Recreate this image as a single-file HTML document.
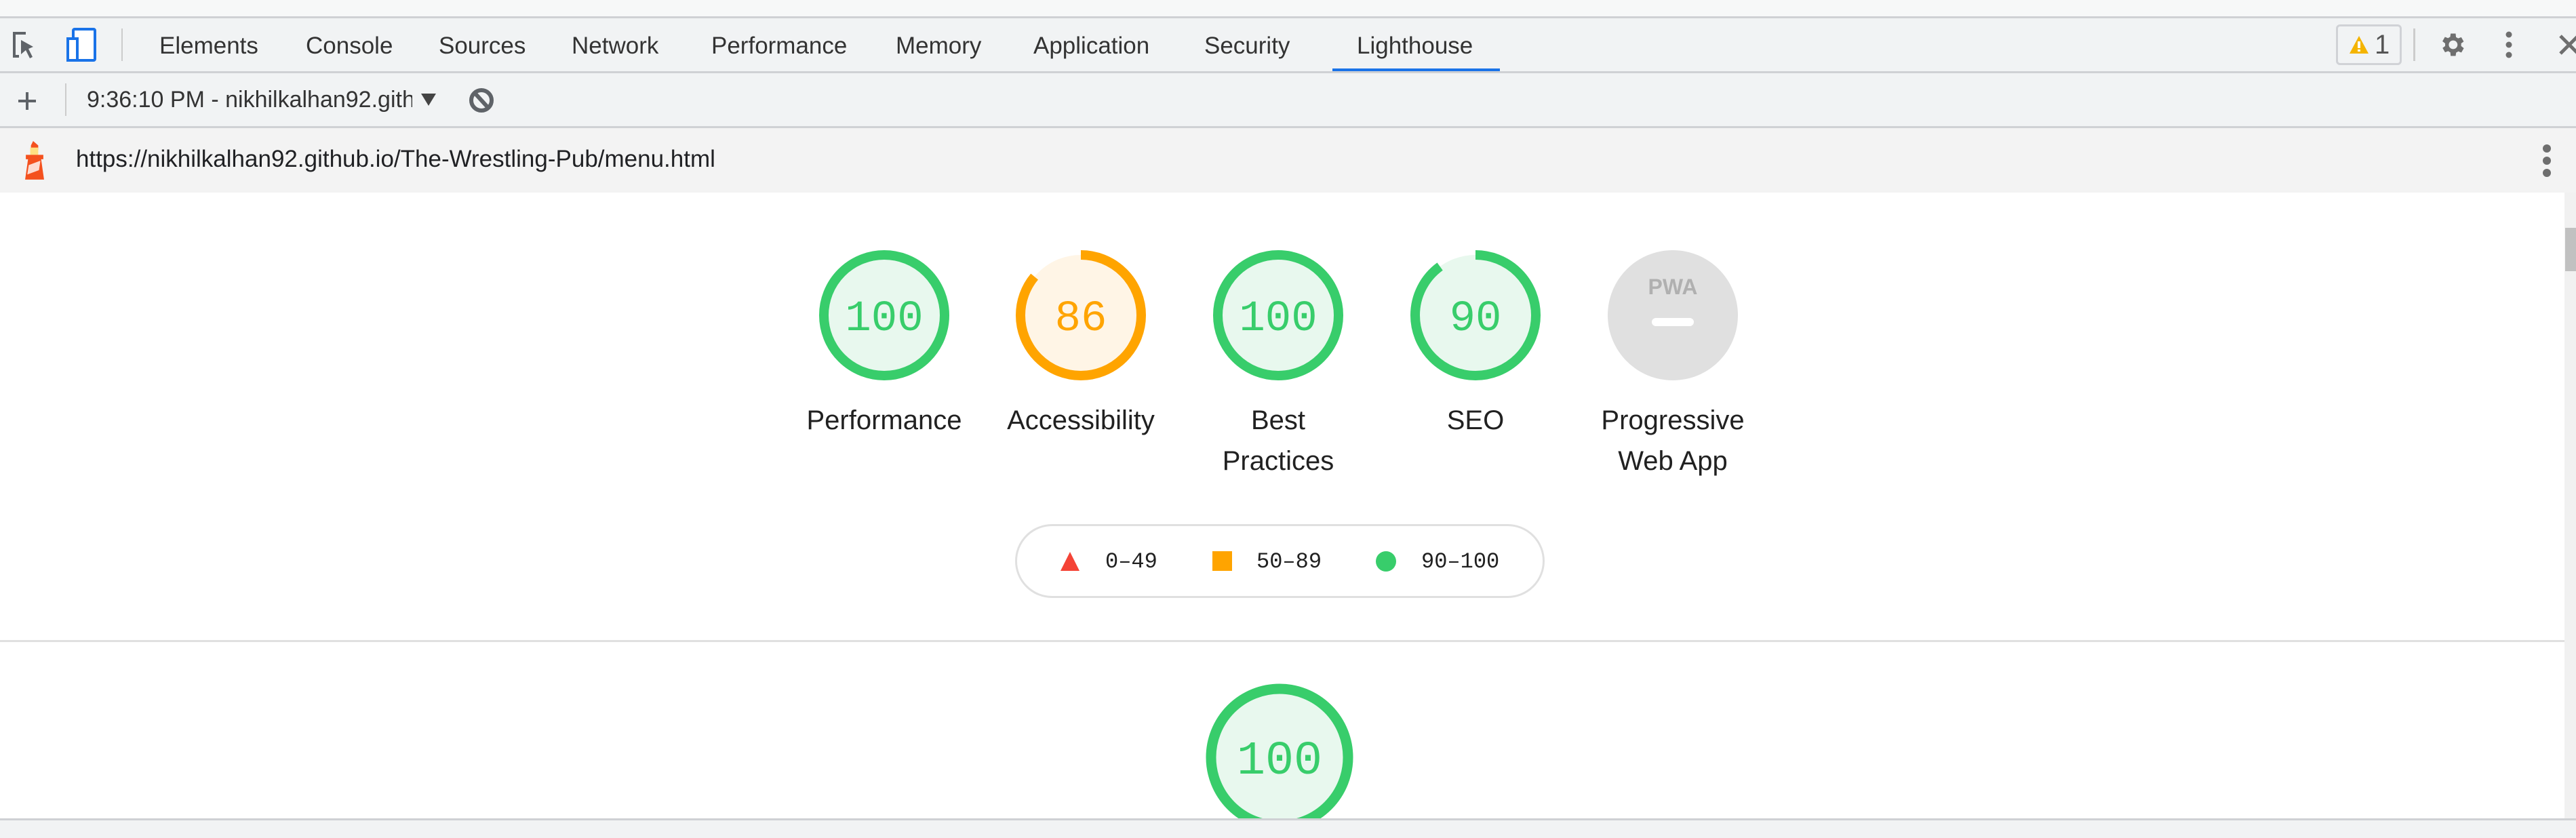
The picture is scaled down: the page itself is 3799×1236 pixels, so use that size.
<!DOCTYPE html>
<html><head><meta charset="utf-8"><style>
*{margin:0;padding:0;box-sizing:border-box}
body{width:3799px;height:1236px;position:relative;overflow:hidden;background:#fff;font-family:"Liberation Sans",sans-serif}
.a{position:absolute}
.tab{position:absolute;top:46px;font-size:35px;color:#333;line-height:44px}
.mono{font-family:"Liberation Mono","DejaVu Sans Mono",monospace}
.lbl{position:absolute;width:300px;text-align:center;font-size:40px;color:#212121;line-height:60px;top:590px}
</style></head><body>
<div class="a" style="left:0;top:0;width:3799px;height:24px;background:#f7f8f8"></div>
<div class="a" style="left:0;top:24px;width:3799px;height:3px;background:#cfd1d4"></div>
<div class="a" style="left:0;top:27px;width:3799px;height:79px;background:#f1f3f4"></div>
<div class="a" style="left:0;top:105px;width:3799px;height:3px;background:#cfd1d4"></div>
<div class="a" style="left:0;top:108px;width:3799px;height:78px;background:#f1f3f4"></div>
<div class="a" style="left:0;top:186px;width:3799px;height:3px;background:#cfd1d4"></div>
<div class="a" style="left:0;top:189px;width:3799px;height:95px;background:#f3f3f3"></div>

<!-- top icons -->
<svg class="a" style="left:18px;top:46px" width="50" height="44" viewBox="0 0 50 44"><path d="M20 3H3v34h7" fill="none" stroke="#5f6368" stroke-width="4"/><path d="M13 13l18 10-7 3 6 12-4 2-6-12-7 6z" fill="#5f6368"/></svg>
<svg class="a" style="left:98px;top:41px" width="46" height="50"><rect x="10" y="2" width="32" height="46" rx="2" fill="#fff" stroke="#1a73e8" stroke-width="4"/><rect x="2" y="16" width="14" height="32" fill="#fff" stroke="#1a73e8" stroke-width="4"/></svg>
<div class="a" style="left:179px;top:42px;width:2px;height:48px;background:#ccc"></div>
<div class="tab" style="left:235px">Elements</div>
<div class="tab" style="left:451px">Console</div>
<div class="tab" style="left:647px">Sources</div>
<div class="tab" style="left:843px">Network</div>
<div class="tab" style="left:1049px">Performance</div>
<div class="tab" style="left:1321px">Memory</div>
<div class="tab" style="left:1524px">Application</div>
<div class="tab" style="left:1776px">Security</div>
<div class="tab" style="left:2001px">Lighthouse</div>
<div class="a" style="left:1965px;top:101px;width:247px;height:4px;background:#1a73e8"></div>

<div class="a" style="left:3445px;top:36px;width:97px;height:60px;border:3px solid #d0d2d6;border-radius:6px"></div>
<svg class="a" style="left:3464px;top:52px" width="30" height="28"><path d="M15 1L29 27H1z" fill="#f4b400"/><rect x="13" y="9" width="4" height="10" fill="#fff"/><rect x="13" y="21" width="4" height="3" fill="#fff"/></svg>
<div class="a" style="left:3502px;top:44px;font-size:40px;color:#555">1</div>
<div class="a" style="left:3559px;top:42px;width:3px;height:48px;background:#ccc"></div>
<svg class="a" style="left:3594px;top:44px" width="44" height="44" viewBox="0 0 24 24"><path fill="#6e6e6e" d="M19.4 13a7.5 7.5 0 000-2l2.1-1.6-2-3.5-2.5 1a7.3 7.3 0 00-1.7-1L15 3h-4l-.4 2.7a7.3 7.3 0 00-1.7 1l-2.5-1-2 3.5L6.6 11a7.5 7.5 0 000 2l-2.1 1.6 2 3.5 2.5-1a7.3 7.3 0 001.7 1L11 21h4l.4-2.7a7.3 7.3 0 001.7-1l2.5 1 2-3.5zM13 15.5a3.5 3.5 0 110-7 3.5 3.5 0 010 7z"/></svg>
<svg class="a" style="left:3691px;top:46px" width="18" height="44"><circle cx="9" cy="5" r="4.5" fill="#6e6e6e"/><circle cx="9" cy="20" r="4.5" fill="#6e6e6e"/><circle cx="9" cy="35" r="4.5" fill="#6e6e6e"/></svg>
<svg class="a" style="left:3773px;top:50px" width="30" height="32"><path d="M3 3l26 26M29 3L3 29" stroke="#6e6e6e" stroke-width="5"/></svg>

<!-- row2 -->
<svg class="a" style="left:25px;top:134px" width="30" height="30"><path d="M15 2v26M2 15h26" stroke="#5f6368" stroke-width="4"/></svg>
<div class="a" style="left:96px;top:123px;width:2px;height:48px;background:#ccc"></div>
<div class="a" style="left:128px;top:128px;font-size:34px;color:#333;width:480px;overflow:hidden;white-space:nowrap">9:36:10 PM - nikhilkalhan92.github.io</div>
<svg class="a" style="left:620px;top:136px" width="24" height="22"><path d="M1 2h22L12 20z" fill="#444"/></svg>
<svg class="a" style="left:690px;top:127px" width="40" height="42"><circle cx="20" cy="21" r="15" fill="none" stroke="#5f6368" stroke-width="6"/><path d="M10 10l20 22" stroke="#5f6368" stroke-width="6"/></svg>

<!-- url row -->
<svg class="a" style="left:28px;top:208px" width="46" height="58" viewBox="0 0 40 54"><path d="M18 0l7 6v6h-10V6z" fill="#f4511e"/><rect x="14" y="9" width="11" height="10" fill="#ffe082"/><path d="M8 19h24v6h-3l4 28H7l4-28H8z" fill="#f4511e"/><path d="M12 33l16-6-2 13-16 6z" fill="#fff" opacity=".8"/></svg>
<div class="a" style="left:112px;top:215px;font-size:35px;color:#202124">https://nikhilkalhan92.github.io/The-Wrestling-Pub/menu.html</div>
<svg class="a" style="left:3746px;top:210px" width="20" height="54"><circle cx="10" cy="9" r="6" fill="#6e6e6e"/><circle cx="10" cy="27" r="6" fill="#6e6e6e"/><circle cx="10" cy="45" r="6" fill="#6e6e6e"/></svg>

<!-- scrollbar -->
<div class="a" style="left:3782px;top:284px;width:17px;height:925px;background:#f1f1f1"></div>
<div class="a" style="left:3783px;top:336px;width:16px;height:64px;background:#c1c1c1"></div>

<!-- gauges -->
<svg class="a" style="left:0;top:284px" width="3780" height="662" viewBox="0 284 3780 662">
<g stroke-width="14" fill="none">
<circle cx="1304" cy="465" r="89" fill="#e8f8ee" stroke="#38cd6b"/>
<circle cx="1594" cy="465" r="89" fill="#fff5e6" stroke="none"/>
<circle cx="1594" cy="465" r="89" stroke="#ffa400" stroke-dasharray="481 560" transform="rotate(-90 1594 465)"/>
<circle cx="1885" cy="465" r="89" fill="#e8f8ee" stroke="#38cd6b"/>
<circle cx="2176" cy="465" r="89" fill="#e8f8ee" stroke="none"/>
<circle cx="2176" cy="465" r="89" stroke="#38cd6b" stroke-dasharray="503 560" transform="rotate(-90 2176 465)"/>
</g>
<circle cx="2467" cy="465" r="96" fill="#e0e0e0"/>
<rect x="2436" y="469" width="62" height="12" rx="6" fill="#fff"/>
<text x="2467" y="434" text-anchor="middle" font-family="Liberation Sans" font-weight="bold" font-size="32" fill="#b0b0b0">PWA</text>
<g font-family="Liberation Mono,DejaVu Sans Mono,monospace" font-size="64" text-anchor="middle">
<text x="1304" y="487" fill="#38cd6b">100</text>
<text x="1594" y="487" fill="#ffa400">86</text>
<text x="1885" y="487" fill="#38cd6b">100</text>
<text x="2176" y="487" fill="#38cd6b">90</text>
</g>
</svg>
<div class="lbl" style="left:1154px">Performance</div>
<div class="lbl" style="left:1444px">Accessibility</div>
<div class="lbl" style="left:1735px">Best<br>Practices</div>
<div class="lbl" style="left:2026px">SEO</div>
<div class="lbl" style="left:2317px">Progressive<br>Web App</div>

<!-- legend -->
<div class="a" style="left:1497px;top:773px;width:781px;height:109px;border:3px solid #e0e0e0;border-radius:55px"></div>
<svg class="a" style="left:1563px;top:813px" width="30" height="30"><path d="M15 1L29 29H1z" fill="#f44336"/></svg>
<div class="a mono" style="left:1630px;top:810px;font-size:32px;color:#212121">0–49</div>
<div class="a" style="left:1788px;top:813px;width:29px;height:29px;background:#ffa400"></div>
<div class="a mono" style="left:1853px;top:810px;font-size:32px;color:#212121">50–89</div>
<div class="a" style="left:2029px;top:813px;width:30px;height:30px;border-radius:50%;background:#38cd6b"></div>
<div class="a mono" style="left:2096px;top:810px;font-size:32px;color:#212121">90–100</div>

<div class="a" style="left:0;top:944px;width:3782px;height:3px;background:#e0e0e0"></div>
<svg class="a" style="left:1770px;top:1000px" width="240" height="208"><circle cx="117" cy="117" r="101" fill="#e8f8ee" stroke="#38cd6b" stroke-width="15"/><text x="117" y="141" text-anchor="middle" font-family="Liberation Mono,DejaVu Sans Mono,monospace" font-size="70" fill="#38cd6b">100</text></svg>
<div class="a" style="left:0;top:1207px;width:3799px;height:3px;background:#cfd1d4"></div>
<div class="a" style="left:0;top:1210px;width:3799px;height:26px;background:#f1f3f4"></div>
</body></html>
